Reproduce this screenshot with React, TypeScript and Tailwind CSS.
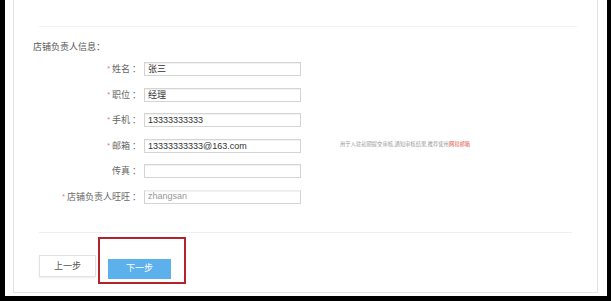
const font = "font-['Liberation_Sans','Noto_Sans_CJK_SC',sans-serif]";

type Row = { label: string; value: string; required: boolean; hint?: boolean; faint?: boolean };

const rows: Row[] = [
  { label: "姓名", value: "张三", required: true },
  { label: "职位", value: "经理", required: true },
  { label: "手机", value: "13333333333", required: true },
  { label: "邮箱", value: "13333333333@163.com", required: true, hint: true },
  { label: "传真", value: "", required: false },
  { label: "店铺负责人旺旺", value: "zhangsan", required: true, faint: true },
];

const App = () => {
  return (
    <div className={`w-[611px] h-[301px] bg-black pl-[5px] ${font}`}>
      <div className="w-[602px] h-[296px] bg-white pl-[8px]">
        <div className="w-[585px] h-[293px] border-x border-b border-[#e4e4e4] flex flex-col">
          {/* top divider */}
          <div className="mt-[26px] ml-[25px] w-[538px] h-px bg-[#f1f1f1]" />

          <p className="mt-[14px] ml-[19px] text-[9px] leading-[12px] text-[#555]">店铺负责人信息：</p>

          {/* form */}
          <div className="mt-[9px] flex flex-col gap-[11.6px]">
            {rows.map((row) => (
              <div key={row.label} className="flex items-center h-[14px]">
                <div className="w-[125px] flex justify-end items-center text-[9px] leading-[12px] text-[#666]">
                  {row.required && <span className="text-[#e5736f] text-[7px] mr-[2px]">*</span>}
                  <span>{row.label}</span>
                  <span className="ml-[2px] w-[7px]">：</span>
                </div>
                <div
                  className={`ml-[5px] w-[157px] h-[14px] border border-[#d4d4d4] shadow-[inset_0_1px_1px_rgba(0,0,0,0.06)] flex items-center pl-[3px] text-[9px] leading-[12px] ${
                    row.faint ? "text-[#999] text-[6px] items-end pb-[1px] border-t-[#ececec]" : "text-[#333]"
                  }`}
                >
                  {row.value}
                </div>
                {row.hint && (
                  <p className="ml-[39px] -mt-[2px] text-[5.3px] leading-[7px] text-[#999] whitespace-nowrap">
                    用于入驻初期提交审核,通知审核结果,推荐使用<span className="text-[#e4574a]">网易邮箱</span>
                  </p>
                )}
              </div>
            ))}
          </div>

          {/* bottom divider */}
          <div className="mt-[28px] ml-[25px] w-[533px] h-px bg-[#efefef]" />

          {/* buttons */}
          <div className="mt-[21px] ml-[25px] flex items-center gap-[12px]">
            <button className="w-[57px] h-[22px] bg-white border border-[#e2e2e2] shadow-[0_1px_2px_rgba(0,0,0,0.08)] text-[9px] text-[#555]">
              上一步
            </button>
            <div className="relative">
              <button className="w-[63px] h-[20px] bg-[#5cb0ec] text-[9px] text-white">下一步</button>
              <div className="absolute left-[-10px] top-[-17px] w-[88px] h-[47px] border-2 border-[#b3232a]" />
            </div>
          </div>
        </div>
      </div>
    </div>
  );
};

export default App;
